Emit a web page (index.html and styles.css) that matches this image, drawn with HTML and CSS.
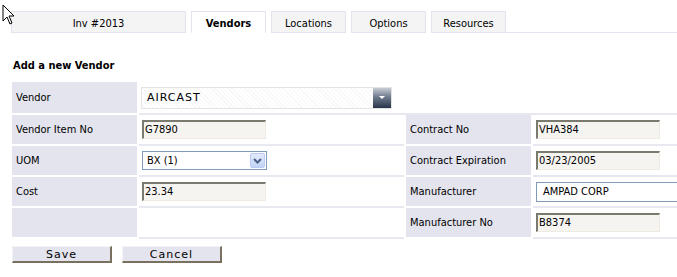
FILE: index.html
```html
<!DOCTYPE html>
<html>
<head>
<meta charset="utf-8">
<link rel="stylesheet" href="styles.css">
</head>
<body>
<svg class="cursor" width="14" height="22" viewBox="0 0 14 22"><path d="M1 1 L1 17 L5 13 L8 20 L10 19 L7 12 L12 12 Z" fill="#fff" stroke="#000" stroke-width="1"/></svg>
<div class="tabs">
  <div class="tab tab-inv">Inv #2013</div>
  <div class="tab tab-active">Vendors</div>
  <div class="tab">Locations</div>
  <div class="tab">Options</div>
  <div class="tab">Resources</div>
  <div class="tab-fill"></div>
</div>
<h1 class="heading">Add a new Vendor</h1>
<table class="form">
  <colgroup>
    <col class="col-lbl">
    <col class="col-val">
    <col class="col-lbl">
    <col class="col-val">
  </colgroup>
  <tr class="row-first">
    <td class="lbl">Vendor</td>
    <td class="val" colspan="3">
      <div class="vsel"><span class="vsel-text">AIRCAST</span><span class="vsel-btn"><svg width="8" height="4" viewBox="0 0 8 4"><path d="M1 0 H7 L4 3 Z" fill="#fff"/></svg></span></div>
    </td>
  </tr>
  <tr>
    <td class="lbl">Vendor Item No</td>
    <td class="val"><div class="inp">G7890</div></td>
    <td class="lbl">Contract No</td>
    <td class="val"><div class="inp">VHA384</div></td>
  </tr>
  <tr>
    <td class="lbl">UOM</td>
    <td class="val"><div class="xsel"><span class="xsel-text">BX (1)</span><span class="xsel-btn"><svg width="9" height="6" viewBox="0 0 9 6"><path d="M1 1 L4.5 4.5 L8 1" fill="none" stroke="#4d6185" stroke-width="2"/></svg></span></div></td>
    <td class="lbl">Contract Expiration</td>
    <td class="val"><div class="inp">03/23/2005</div></td>
  </tr>
  <tr>
    <td class="lbl">Cost</td>
    <td class="val"><div class="inp">23.34</div></td>
    <td class="lbl">Manufacturer</td>
    <td class="val"><div class="finp">AMPAD CORP</div></td>
  </tr>
  <tr>
    <td class="lbl"></td>
    <td class="val"></td>
    <td class="lbl">Manufacturer No</td>
    <td class="val"><div class="inp">B8374</div></td>
  </tr>
</table>
<div class="buttons">
  <button class="btn">Save</button>
  <button class="btn">Cancel</button>
</div>
</body>
</html>
```
FILE: styles.css
```css
html, body {
  margin: 0;
  padding: 0;
  overflow: hidden;
  background: #fff;
}
body {
  font-family: "DejaVu Sans Condensed", "DejaVu Sans", sans-serif;
  font-size: 11px;
  color: #000;
  width: 677px;
  height: 277px;
  position: relative;
}
.cursor {
  position: absolute;
  left: 2px;
  top: 4px;
}
.tabs {
  display: flex;
  align-items: flex-end;
  margin-top: 11px;
  padding-left: 11px;
  height: 22px;
}
.tab {
  box-sizing: border-box;
  width: 75px;
  height: 22px;
  margin-right: 5px;
  background: #f4f4f4;
  border: 1px solid #e4e4ee;
  text-align: center;
  line-height: 23px;
}
.tab-inv {
  width: 175px;
}
.tab-active {
  background: #fff;
  font-weight: bold;
  border-bottom-color: #fff;
}
.tab-fill {
  flex: 1;
  height: 22px;
  box-sizing: border-box;
  border-bottom: 1px solid #e4e4ee;
  margin-left: -5px;
}
.heading {
  font-size: 11px;
  font-weight: bold;
  margin: 0;
  padding: 26px 0 0 13px;
  line-height: 13px;
}
.form {
  border-collapse: separate;
  border-spacing: 2px 0;
  margin: 10px 0 0 10px;
  table-layout: fixed;
  width: 790px;
}
.col-lbl {
  width: 125px;
}
.col-val {
  width: 265px;
}
.form td {
  padding: 0;
  box-sizing: border-box;
  height: 31px;
  vertical-align: middle;
  white-space: nowrap;
}
.form .row-first td {
  height: 33px;
}
.lbl {
  background: #e4e4ee;
  border-bottom: 2px solid #fff;
  padding-left: 4px !important;
}
.val {
  border-bottom: 2px solid #e8e8f0;
  padding-left: 3px !important;
}
.inp {
  box-sizing: border-box;
  width: 124px;
  height: 19px;
  border-top: 2px solid #7b7a6e;
  border-left: 2px solid #7b7a6e;
  border-right: 1px solid #f0ebe0;
  border-bottom: 1px solid #f0ebe0;
  background: #f5f4f1;
  padding-left: 1px;
  line-height: 16px;
}
.vsel {
  display: flex;
  box-sizing: border-box;
  width: 251px;
  height: 22px;
  margin-left: -1px;
  border: 1px solid #e4e4e4;
  background: repeating-linear-gradient(45deg, #fff 0 2px, #f7f7f7 2px 3px);
}
.vsel-text {
  flex: 1;
  padding-left: 5px;
  line-height: 20px;
  letter-spacing: 1px;
  font-family: "DejaVu Sans", sans-serif;
  font-size: 11px;
}
.vsel-btn {
  width: 18px;
  height: 20px;
  background: linear-gradient(#c8ccd4, #6e7a8e 45%, #283447);
  display: flex;
  align-items: center;
  justify-content: center;
}
.xsel {
  display: flex;
  box-sizing: border-box;
  width: 125px;
  height: 19px;
  border: 1px solid #7f9db9;
  background: #fff;
}
.xsel-text {
  flex: 1;
  padding-left: 4px;
  line-height: 17px;
}
.xsel-btn {
  width: 15px;
  height: 15px;
  margin: 1px;
  box-sizing: border-box;
  border: 1px solid #b7cbf5;
  border-radius: 2px;
  background: linear-gradient(#e2ebfd, #c3d4f7);
  display: flex;
  align-items: center;
  justify-content: center;
}
.finp {
  box-sizing: border-box;
  width: 200px;
  height: 20px;
  border: 1px solid #7f9db9;
  background: #fff;
  padding-left: 6px;
  line-height: 18px;
}
.buttons {
  display: flex;
  gap: 10px;
  margin: 7px 0 0 12px;
}
.btn {
  box-sizing: border-box;
  width: 100px;
  height: 17px;
  padding: 0;
  margin: 0;
  background: #e4e4ee;
  border: none;
  border-right: 2px solid #7a7060;
  border-bottom: 2px solid #7a7060;
  border-top: 1px solid #f4f4f8;
  border-left: 1px solid #f4f4f8;
  font-family: "DejaVu Sans", sans-serif;
  font-size: 11px;
  letter-spacing: 1px;
  line-height: 13px;
  color: #000;
}
```
